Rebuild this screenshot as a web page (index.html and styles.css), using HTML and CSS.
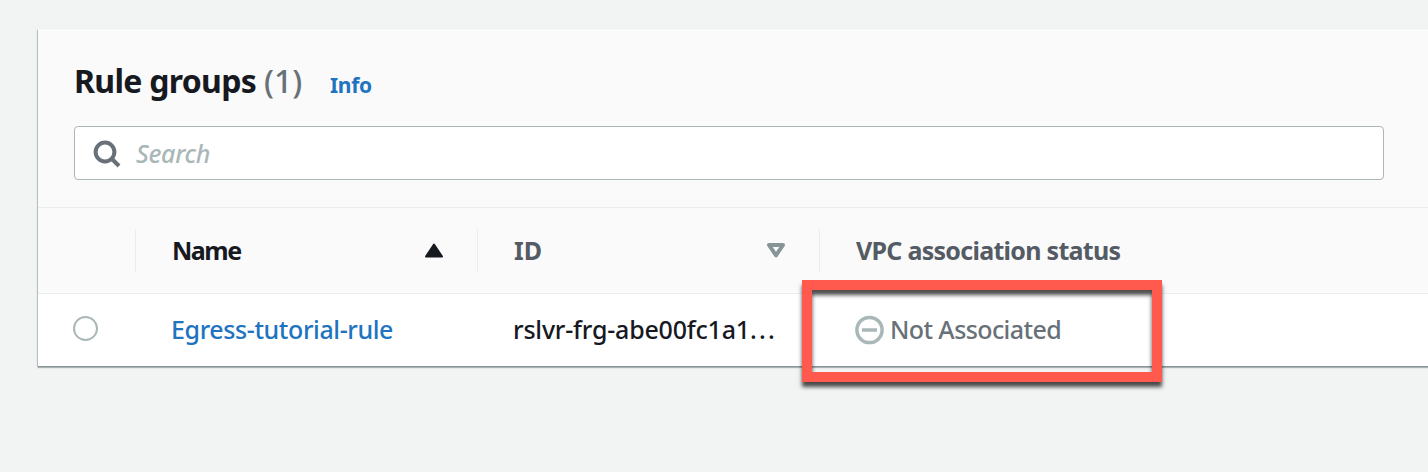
FILE: index.html
```
<!DOCTYPE html>
<html lang="en">
<head>
<meta charset="utf-8">
<title>Rule groups</title>
<link rel="stylesheet" href="styles.css">
</head>
<body>
<main class="panel">
  <header class="panel-header">
    <div class="heading">
      <h1 class="title">Rule groups</h1>
      <span class="count">(1)</span>
      <a class="info">Info</a>
    </div>
    <div class="search">
      <svg class="search-icon" width="28" height="28" viewBox="0 0 28 28"><circle cx="12" cy="12" r="9.4"/><path d="M18.5 18.5L26 26"/></svg>
      <span class="placeholder">Search</span>
    </div>
  </header>
  <div class="row head-row">
    <div class="cell select-cell"></div>
    <div class="cell head-cell sorted">
      <span class="label name-label">Name</span>
      <svg class="sort" width="20" height="16" viewBox="0 0 20 16"><path class="sort-up" d="M10 1.5L18 13.5H2Z"/></svg>
    </div>
    <div class="cell head-cell">
      <span class="label">ID</span>
      <svg class="sort" width="20" height="16" viewBox="0 0 20 16"><path class="sort-down" d="M3 2H17L10 12.3Z"/></svg>
    </div>
    <div class="cell head-cell"><span class="label status-label">VPC association status</span></div>
  </div>
  <div class="row body-row">
    <div class="cell select-cell"><span class="radio"></span></div>
    <div class="cell"><a class="rule-link">Egress-tutorial-rule</a></div>
    <div class="cell"><span class="rule-id">rslvr-frg-abe00fc1a1<span class="ellipsis">...</span></span></div>
    <div class="cell status-cell">
      <svg class="status-icon" width="30" height="30" viewBox="0 0 30 30"><circle cx="15.5" cy="15" r="12.6"/><path d="M8 15H23"/></svg>
      <span class="status">Not Associated</span>
      <div class="highlight"></div>
    </div>
  </div>
</main>
</body>
</html>
```
FILE: styles.css
```
* { box-sizing: border-box; }
body {
  margin: 0;
  height: 472px;
  padding: 29px 0 0 38px;
  overflow: hidden;
  background: #f2f3f3;
  color: #16191f;
  font-family: "Noto Sans", "Open Sans", sans-serif;
  font-size: 25px;
}
.panel {
  width: 1420px;
  height: 337px;
  background: #fff;
  box-shadow: 0 1px 1px #879596, 0 2px 1px rgba(0, 28, 36, .25), -1px 1px 1px rgba(0, 28, 36, .15), 0 0 1px rgba(0, 28, 36, .1);
}
.panel-header {
  height: 179px;
  padding: 29px 74px 0 36px;
  background: #fafafa;
  border-bottom: 1px solid #eaeded;
}
.heading { display: flex; align-items: baseline; height: 68px; line-height: 45px; white-space: nowrap; }
.title { margin: 0; width: 190px; font-size: 32px; font-weight: 700; letter-spacing: -.7px; }
.count { width: 66px; font-size: 32px; font-weight: 500; color: #687078; }
.info { font-size: 21px; font-weight: 700; color: #2074bf; letter-spacing: -.3px; }
.search {
  display: flex;
  align-items: center;
  height: 54px;
  padding-left: 18px;
  background: #fff;
  border: 1px solid #aab7b8;
  border-radius: 4px;
}
.search-icon { position: relative; top: 1px; fill: none; stroke: #687078; stroke-width: 4; }
.placeholder { margin-left: 15px; color: #aab7b8; font-style: italic; font-weight: 500; letter-spacing: -.3px; }
.row { display: grid; grid-template-columns: 97px 342px 342px 1fr; align-items: center; }
.head-row { height: 86px; background: #fafafa; border-bottom: 1px solid #eaeded; }
.body-row { height: 70px; }
.cell { display: flex; align-items: center; height: 43px; padding-left: 36px; white-space: nowrap; }
.head-cell { border-left: 1px solid #eaeded; color: #545b64; font-weight: 700; }
.head-cell.sorted { color: #16191f; }
.label { margin-top: -1px; }
.name-label { letter-spacing: -1.5px; }
.head-cell .sort { margin: 0 33px 0 auto; }
.sort-up { fill: #16191f; stroke: #16191f; stroke-width: 2; stroke-linejoin: round; }
.sort-down { fill: none; stroke: #879596; stroke-width: 4; stroke-linejoin: round; }
.status-label { letter-spacing: -.72px; }
.select-cell { padding-left: 35px; }
.radio { width: 25px; height: 25px; margin-top: -1px; border: 2px solid #aab7b8; border-radius: 50%; background: #fff; }
.rule-link { color: #2074bf; font-weight: 500; letter-spacing: -.4px; }
.rule-id { font-weight: 500; letter-spacing: -.2px; }
.ellipsis { letter-spacing: 2.3px; }
.status-cell { position: relative; padding-left: 35px; }
.status-icon { position: relative; top: 1px; fill: none; stroke: #aab7b8; stroke-width: 3.5; }
.status { margin-left: 6px; color: #687078; font-weight: 500; letter-spacing: -.6px; }
.highlight {
  position: absolute;
  left: -17px;
  top: -28px;
  width: 360px;
  height: 102px;
  border: 10px solid #ff5a4d;
  box-shadow: 0 5px 4px rgba(0, 0, 0, .7), inset 0 5px 4px rgba(0, 0, 0, .7);
}
```
